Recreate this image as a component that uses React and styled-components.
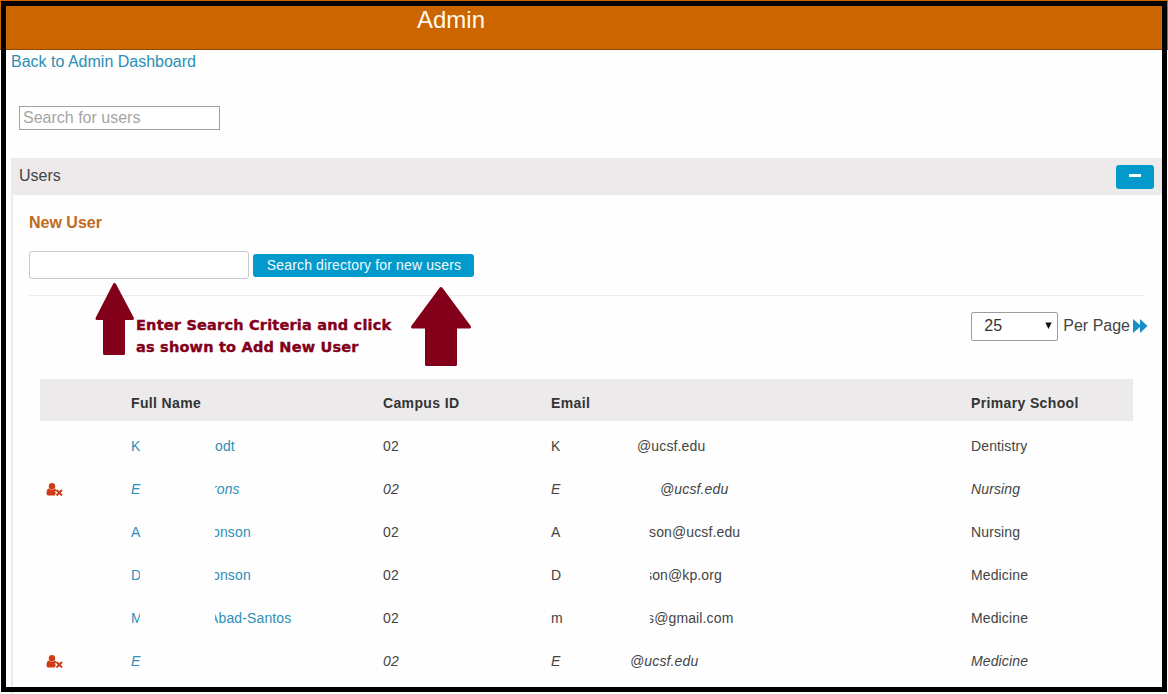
import React from "react";
import styled, { createGlobalStyle } from "styled-components";

const Global = createGlobalStyle`
  * { box-sizing: border-box; }
  html, body { margin: 0; background: #fefefe; }
  body { font-family: "Liberation Sans", Arial, sans-serif; color: #444; font-size: 16px; overflow: hidden; }
`;

const Page = styled.div`
  position: relative;
  width: 1168px;
  height: 694px;
  overflow: hidden;
  background: #fefefe;
`;
const Frame = styled.div`
  position: absolute;
  top: 1px;
  left: 1px;
  width: 1166px;
  height: 691px;
  border: 5px solid #000;
  pointer-events: none;
`;
const Header = styled.header`
  height: 50px;
  padding: 6px 0 0 417px;
  background: #cb6500;
  border-bottom: 1px solid #8d4a08;
  color: #fff8ee;
  font-size: 24px;
  line-height: 28px;
`;
const Main = styled.main`
  padding: 0 6px 0 11px;
`;
const BackLink = styled.a`
  display: block;
  height: 56px;
  padding-top: 2px;
  color: #2b8fb5;
  line-height: 20px;
`;
const UserSearch = styled.input`
  display: block;
  width: 201px;
  height: 24px;
  margin: 0 0 28px 8px;
  padding: 0 3px 1px;
  border: 1px solid #a2a2a2;
  background: #fff;
  font: 16px "Liberation Sans", Arial, sans-serif;
  outline: none;
  &::placeholder { color: #a5a5a5; opacity: 1; }
`;
const Panel = styled.section`
  height: 540px;
  border-left: 2px solid #ecebeb;
`;
const PanelHeader = styled.div`
  display: flex;
  justify-content: space-between;
  height: 37px;
  margin-left: -2px;
  padding: 7px 8px 0;
  background: #eceaeb;
  line-height: 22px;
`;
const Collapse = styled.button`
  display: flex;
  justify-content: center;
  width: 38px;
  height: 24px;
  padding: 9px 0 0;
  border: 0;
  border-radius: 3px;
  background: #0499cb;
`;
const Minus = styled.span`
  width: 12px;
  height: 3px;
  background: #fff;
`;
const PanelBody = styled.div`
  padding: 18px 17px 0 16px;
`;
const NewUser = styled.h2`
  margin: 0;
  color: #c06a1f;
  font-size: 16px;
  line-height: 20px;
`;
const Directory = styled.div`
  display: flex;
  align-items: center;
  gap: 4px;
  height: 28px;
  margin: 18px 0 16px;
`;
const DirectoryInput = styled.input`
  width: 220px;
  height: 28px;
  border: 1px solid #c8c8c8;
  border-radius: 3px;
  background: #fff;
  outline: none;
`;
const DirectoryButton = styled.button`
  width: 221px;
  height: 23px;
  margin-top: 1px;
  padding: 0 0 0 1px;
  border: 0;
  border-radius: 3px;
  background: #0499cb;
  color: #f0fbff;
  font: 14px/22px "Liberation Sans", Arial, sans-serif;
  padding-bottom: 1px;
  letter-spacing: 0.15px;
  white-space: nowrap;
`;
const Divider = styled.div`
  height: 1px;
  background: #ececec;
`;
const Pager = styled.div`
  display: flex;
  align-items: center;
  justify-content: flex-end;
  height: 29px;
  margin: 16px -3px 38px 0;
`;
const SizeSelect = styled.div`
  display: flex;
  align-items: center;
  justify-content: space-between;
  width: 87px;
  height: 29px;
  padding: 0 5px 2px 12px;
  margin-right: 5px;
  border: 1px solid #9c9c9c;
  border-radius: 2px;
  background: #fff;
  color: #333;
`;
const PageLabel = styled.span`
  margin-right: 3px;
  padding-bottom: 2px;
  white-space: nowrap;
`;
const NextIcon = styled.svg`
  margin-bottom: 2px;
`;
const Table = styled.div`
  margin: 0 12px 0 11px;
  font-size: 14px;
`;
const Row = styled.div`
  display: grid;
  grid-template-columns: 91px 252px 168px 420px 1fr;
  align-items: center;
  height: 43px;
  font-style: ${(p) => (p.$inactive ? "italic" : "normal")};
  letter-spacing: 0.13px;
  white-space: nowrap;
`;
const HeadRow = styled(Row)`
  height: 42px;
  margin-bottom: 3px;
  padding-top: 6px;
  background: #eceaeb;
  color: #333;
  font-weight: bold;
  letter-spacing: 0.36px;
`;
const IconCell = styled.span`
  display: flex;
  padding: 1px 0 0 6px;
`;
const Masked = styled.span`
  display: flex;
  color: ${(p) => (p.$link ? "#2f8fb8" : "inherit")};
`;
const Start = styled.span`
  width: ${(p) => p.$w}px;
  overflow: hidden;
`;
const End = styled.span`
  margin-left: ${(p) => p.$gap}px;
  padding-right: 2px;
  overflow: hidden;
  text-indent: ${(p) => -p.$cut}px;
`;
const Note = styled.p`
  position: absolute;
  left: 136px;
  top: 314px;
  margin: 0;
  color: #83001a;
  font: bold 14.5px/22px "DejaVu Sans", Verdana, sans-serif;
  letter-spacing: 0.2px;
  -webkit-text-stroke: 0.4px #83001a;
  white-space: nowrap;
`;
const Arrow = styled.svg`
  position: absolute;
  left: ${(p) => p.$x}px;
  top: ${(p) => p.$y}px;
  fill: #83001a;
  stroke: #83001a;
  stroke-width: 3;
  stroke-linejoin: round;
`;

const RemoveUser = () => (
  <svg width="17" height="13" viewBox="0 0 17 13" fill="#cf3b16">
    <circle cx="6" cy="3.3" r="3.2" />
    <path d="M2.8 5.6 Q6 8 9.2 5.6 L10.4 7.2 8.8 8.8 10.1 10.2 8.8 11.6 9.3 12.6 H2.2 Q.5 12.6.5 10.5 Q.6 6 2.8 5.6Z" />
    <path d="M10.5 7 L16 12.4 M16 7 L10.5 12.4" stroke="#cf3b16" strokeWidth="2.1" />
  </svg>
);

const users = [
  { name: ["K", 10, 74, 0, "odt"], mail: ["K", 10, 76, 0, "@ucsf.edu"], school: "Dentistry" },
  { name: ["E", 10, 74, 3, "rons"], mail: ["E", 10, 99, 0, "@ucsf.edu"], school: "Nursing", inactive: true },
  { name: ["A", 10, 74, 3, "onson"], mail: ["A", 10, 88, 0, "son@ucsf.edu"], school: "Nursing" },
  { name: ["D", 9, 75, 3, "onson"], mail: ["D", 11, 88, 5, "son@kp.org"], school: "Medicine" },
  { name: ["M", 9, 75, 6, "Abad-Santos"], mail: ["m", 12, 87, 3, "s@gmail.com"], school: "Medicine" },
  { name: ["E", 10, 0, 0, ""], mail: ["E", 11, 68, 0, "@ucsf.edu"], school: "Medicine", inactive: true },
];

const MaskedText = ({ parts: [start, width, gap, cut, end], link }) => (
  <Masked $link={link}>
    <Start $w={width}>{start}</Start>
    {end && <End $gap={gap} $cut={cut}>{end}</End>}
  </Masked>
);

export default function App() {
  return (
    <Page>
      <Global />
      <Header>Admin</Header>
      <Main>
        <BackLink>Back to Admin Dashboard</BackLink>
        <UserSearch placeholder="Search for users" />
        <Panel>
          <PanelHeader>
            Users
            <Collapse aria-label="Collapse"><Minus /></Collapse>
          </PanelHeader>
          <PanelBody>
            <NewUser>New User</NewUser>
            <Directory>
              <DirectoryInput />
              <DirectoryButton>Search directory for new users</DirectoryButton>
            </Directory>
            <Divider />
            <Pager>
              <SizeSelect>
                25
                <svg width="7" height="7" viewBox="0 0 7 7"><path d="M0.3 0.5H6.7L3.5 7Z" fill="#111" /></svg>
              </SizeSelect>
              <PageLabel>Per Page</PageLabel>
              <NextIcon width="15" height="14" viewBox="0 0 15 14" fill="#1691c6"><path d="M0 0L7 6V0L14.5 7 7 14V8L0 14Z" /></NextIcon>
            </Pager>
            <Table>
              <HeadRow>
                <span />
                <span>Full Name</span>
                <span>Campus ID</span>
                <span>Email</span>
                <span>Primary School</span>
              </HeadRow>
              {users.map((u, i) => (
                <Row key={i} $inactive={u.inactive}>
                  <IconCell>{u.inactive && <RemoveUser />}</IconCell>
                  <MaskedText parts={u.name} link />
                  <span>02</span>
                  <MaskedText parts={u.mail} />
                  <span>{u.school}</span>
                </Row>
              ))}
            </Table>
          </PanelBody>
        </Panel>
      </Main>
      <Arrow $x={95} $y={281} width="40" height="75" viewBox="0 0 40 75">
        <path d="M19.5 3.5L37.5 37.5H28.5V72.5H9.5V37.5H2Z" />
      </Arrow>
      <Arrow $x={410} $y={285} width="62" height="82" viewBox="0 0 62 82">
        <path d="M31 3.5L59.5 42H45.5V79.5H16.5V42H2.5Z" />
      </Arrow>
      <Note>Enter Search Criteria and click<br />as shown to Add New User</Note>
      <Frame />
    </Page>
  );
}
